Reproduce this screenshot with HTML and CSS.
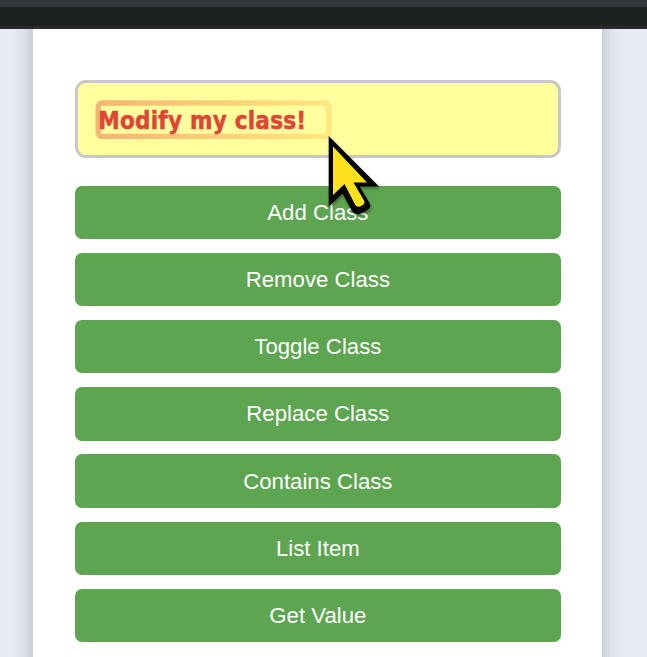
FILE: index.html
```html
<!DOCTYPE html>
<html lang="en">
<head>
<meta charset="utf-8">
<title>Modify my class</title>
<link rel="stylesheet" href="styles.css">
</head>
<body>
<div class="topbar"></div>
<main class="page">
  <div class="panel">
    <div class="box">
      <span class="label">Modify my class!</span>
      <svg class="outline" width="237" height="40" viewBox="0 0 237 40" aria-hidden="true">
        <defs>
          <linearGradient id="fade" x1="0" x2="1" y1="0" y2="0">
            <stop offset="0" stop-color="#f5b574"/>
            <stop offset=".5" stop-color="#f9cf76"/>
            <stop offset="1" stop-color="#fee87e"/>
          </linearGradient>
        </defs>
        <rect x="3.2" y="3" width="230.6" height="33.4" rx="4" fill="none" stroke="url(#fade)" stroke-width="5.4"/>
      </svg>
    </div>
    <button class="btn">Add Class</button>
    <button class="btn">Remove Class</button>
    <button class="btn">Toggle Class</button>
    <button class="btn">Replace Class</button>
    <button class="btn">Contains Class</button>
    <button class="btn">List Item</button>
    <button class="btn">Get Value</button>
  </div>
</main>
<svg class="cursor" width="60" height="90" viewBox="0 0 60 90" aria-hidden="true">
  <path d="M8.700 1 V71.500 L22.500 58.500 L31.500 75 Q34.500 80.500 40.500 78.500 L46 76 Q52 73 49.500 68 L39.500 51.500 H59 Z" fill="#000"/>
  <path d="M13 11.500 V60 L24.500 49 L35 69.500 Q36.500 72.500 40 71.500 L42 70.500 Q45.500 68.500 44 65.500 L33.500 47.500 H47 Z" fill="#ffe11d"/>
</svg>
</body>
</html>
```
FILE: styles.css
```css
body {
  margin: 0;
  height: 657px;
  overflow: hidden;
  position: relative;
  display: flex;
  flex-direction: column;
  background: #e6ebf4;
  font-family: "Liberation Sans", Arial, sans-serif;
}

.topbar {
  flex: none;
  height: 29px;
  background: linear-gradient(#34393c 0 6px, #2c2f31 7px, #1c2020 8px 25px, #2b2a2c 27px 29px);
}

.page {
  flex: 1;
  overflow: hidden;
  padding: 0 44.600px 0 33px;
}

.panel {
  box-sizing: border-box;
  height: 760px;
  margin-top: -50px;
  padding: 101.300px 41.400px 0 41.700px;
  display: flex;
  flex-direction: column;
  gap: 13.900px;
  background: #fff;
  box-shadow: 0 0 20px rgba(40, 45, 65, .28);
}

.box {
  position: relative;
  box-sizing: border-box;
  flex: none;
  height: 77.500px;
  margin-bottom: 14px;
  padding: 3px 0 0 20.600px;
  display: flex;
  align-items: center;
  border: 3px solid #c8c8ca;
  border-radius: 11px;
  background: #ffff9e;
}

.label {
  position: relative;
  z-index: 1;
  color: #df4638;
  font: bold 24px/32px "DejaVu Sans Condensed", "DejaVu Sans", sans-serif;
  font-stretch: condensed;
  letter-spacing: .22px;
  -webkit-text-stroke: .5px #df4638;
  white-space: nowrap;
}

.outline {
  position: absolute;
  left: 17px;
  top: 16.500px;
}

.btn {
  flex: none;
  height: 53.300px;
  padding: 0;
  border: 0;
  border-radius: 7px;
  background: #5da550;
  color: #fff;
  font: 22.200px/53px "Liberation Sans", Arial, sans-serif;
}

.cursor {
  position: absolute;
  left: 320px;
  top: 135px;
  filter: drop-shadow(1px 2px 1.500px rgba(0, 0, 0, .35));
}
```
